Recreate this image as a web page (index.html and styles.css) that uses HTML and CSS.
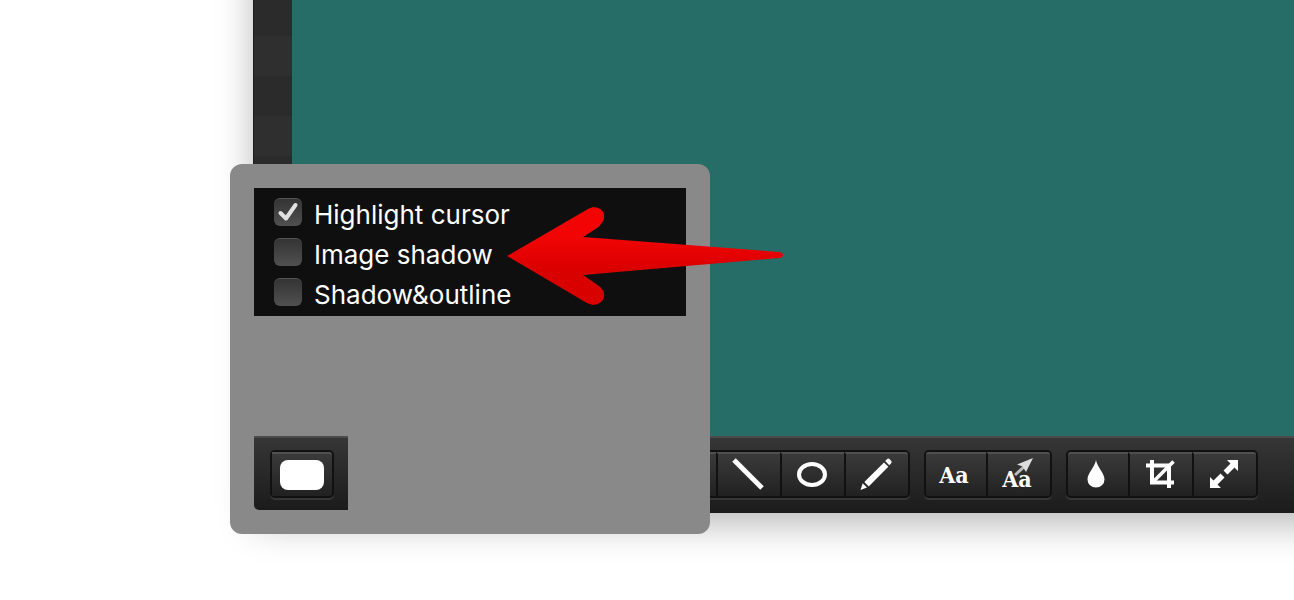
FILE: index.html
```html
<!DOCTYPE html>
<html lang="en">
<head>
    <meta charset="UTF-8">
    <title>Image Editor</title>
    <meta name="viewport" content="width=device-width, initial-scale=1">
    <link rel="stylesheet" href="styles.css">
</head>
<body>

    <main class="editor">
        <div class="workspace">
            <div class="side-strip"></div>
            <div class="canvas"></div>
        </div>

        <div class="toolbar">
            <div class="tool-group">
                <button type="button" aria-label="Rectangle">
                    <svg width="32" height="32" viewBox="0 0 32 32"><rect x="3" y="6" width="26" height="20" fill="none" stroke="#fff" stroke-width="4"/></svg>
                </button>
                <button type="button" aria-label="Line">
                    <svg width="32" height="32" viewBox="0 0 32 32"><path d="M2 2L30 30" stroke="#fff" stroke-width="5"/></svg>
                </button>
                <button type="button" aria-label="Ellipse">
                    <svg width="32" height="32" viewBox="0 0 32 32"><ellipse cx="16" cy="16.500" rx="13" ry="10.500" fill="none" stroke="#fff" stroke-width="4"/></svg>
                </button>
                <button type="button" aria-label="Pencil">
                    <svg width="32" height="32" viewBox="0 0 32 32" fill="#fff"><path d="M25.200 3L27.500 .7Q28.500 0 29.500 1L31.300 3Q32 4 31.300 5L29.300 7.300Z"/><path d="M24 4.500L28.300 8.800L8.700 28.500L4.300 24Z"/><path d="M2.700 25.300L7 29.500L.5 32Z"/></svg>
                </button>
            </div>
            <div class="tool-group">
                <button type="button" class="text-tool">Aa</button>
                <button type="button" class="text-tool callout">Aa
                    <svg width="22" height="20" viewBox="0 0 22 20"><path d="M3 17L13 8" stroke="#bbb" stroke-width="3"/><path d="M21 0L5 6.500L10.500 8.500L14 14Z" fill="#ddd"/></svg>
                </button>
            </div>
            <div class="tool-group">
                <button type="button" aria-label="Blur">
                    <svg width="32" height="32" viewBox="0 0 32 32"><path d="M15 2C16 9 23.500 15 23.500 21.500A8.500 8 0 0 1 6.500 21.500C6.500 15 14 9 15 2Z" fill="#fff"/></svg>
                </button>
                <button type="button" aria-label="Crop">
                    <svg width="32" height="32" viewBox="0 0 32 32" fill="none" stroke="#fff" stroke-width="4"><path d="M2 7.500H25V30"/><path d="M8 2V24.500H30"/><path d="M8.500 24.500L29.500 3.500" stroke-width="3.500"/></svg>
                </button>
                <button type="button" aria-label="Resize">
                    <svg width="32" height="32" viewBox="0 0 32 32" fill="#fff"><path d="M19 2H30V13L26.500 9.500L19.500 16.500L15.500 12.500L22.500 5.500Z"/><path d="M13 30H2V19L5.500 22.500L12.500 15.500L16.500 19.500L9.500 26.500Z"/></svg>
                </button>
            </div>
        </div>

        <div class="popover">
            <div class="options">
                <label class="option">
                    <span class="tick">
                        <input type="checkbox" checked>
                        <svg width="28" height="28" viewBox="0 0 28 28"><path d="M6.500 15L12 20.500L21.500 7" fill="none" stroke="#e2e2e2" stroke-width="4" stroke-linecap="round" stroke-linejoin="round"/></svg>
                    </span>
                    Highlight cursor
                </label>
                <label class="option">
                    <span class="tick"><input type="checkbox"></span>
                    Image shadow
                </label>
                <label class="option">
                    <span class="tick"><input type="checkbox"></span>
                    Shadow&amp;outline
                </label>
            </div>

            <div class="swatch-bar">
                <div class="tool-group">
                    <button type="button" class="swatch-button" aria-label="Background color"><span class="swatch"></span></button>
                </div>
            </div>

            <svg class="pointer" width="276" height="100" viewBox="0 0 276 100">
                <defs>
                    <linearGradient id="red" x1="0" y1="0" x2="0" y2="1">
                        <stop offset="0.300" stop-color="#f20404"/>
                        <stop offset="0.650" stop-color="#d90000"/>
                    </linearGradient>
                </defs>
                <path d="M0 50L81 3C91-3 103 7 94 18Q93 20 90 22L76 31L272 46Q276 47 276 49Q276 52 272 52L76 69L92 80C104 89 93 104 80 97Z" fill="url(#red)"/>
            </svg>
        </div>
    </main>

</body>
</html>
```
FILE: styles.css
```css
body {
    font-family: Inter, 'Liberation Sans', sans-serif;
    margin: 0;
    min-height: 100vh;
    display: flex;
    background: white;
    color: white;
    overflow: hidden;
}

/* The window runs past the top and right edges of the page */
.editor {
    position: relative;
    flex: 1;
    display: flex;
    flex-direction: column;
    margin: -60px -60px 87px 253px;
    box-shadow: 0 12px 34px rgba(0,0,0,0.27);
}

.workspace {
    flex: 1;
    display: flex;
}

.side-strip {
    width: 38px;
    border-left: 1px solid #1c1c1c;
    background: repeating-linear-gradient(#2f2f2f 0 40px, #2b2b2b 40px 80px) 0 16px;
}

.canvas {
    flex: 1;
    background: #266c67;
}

.toolbar, .swatch-bar {
    box-sizing: border-box;
    border-top: 2px solid #4b4b4b;
    background: linear-gradient(#363636, #1b1b1b);
}

.toolbar {
    display: flex;
    justify-content: flex-end;
    gap: 14px;
    height: 77px;
    padding: 12px 96px 0 0;
}

.tool-group {
    display: flex;
    box-sizing: border-box;
    height: 48px;
    border: 2px solid #111;
    border-radius: 5px;
    box-shadow: 0 2px 0 #363636;
}

    .tool-group button {
        display: flex;
        align-items: center;
        justify-content: center;
        box-sizing: border-box;
        width: 62px;
        padding: 0 2px 2px 0;
        border: 0;
        border-top: 2px solid #505050;
        background: linear-gradient(#3a3a3a, #212121);
        color: white;
    }

    .tool-group button:first-child {
        width: 60px;
        border-radius: 3px 0 0 3px;
    }

    .tool-group button + button {
        width: 64px;
        border-left: 2px solid #111;
    }

    .tool-group button:last-child {
        border-radius: 0 3px 3px 0;
    }

    .tool-group .text-tool {
        position: relative;
        padding-right: 4px;
        font: bold 23px 'DejaVu Serif Condensed', 'DejaVu Serif', serif;
    }

    .tool-group .callout {
        padding-top: 8px;
    }

    .tool-group .swatch-button {
        padding: 0;
    }

.callout svg {
    position: absolute;
    top: 4px;
    right: 16px;
}

.popover {
    position: absolute;
    left: -23px;
    bottom: -21px;
    display: flex;
    flex-direction: column;
    align-items: flex-start;
    gap: 120px;
    box-sizing: border-box;
    width: 480px;
    padding: 24px;
    border-radius: 12px;
    background: #898989;
}

.options {
    align-self: stretch;
    padding: 6px 20px 2px;
    background: #0f0f0f;
}

.option {
    display: flex;
    align-items: center;
    gap: 12px;
    height: 40px;
    font-size: 26px;
}

.tick {
    position: relative;
    height: 32px;
}

    .tick input {
        appearance: none;
        display: block;
        width: 28px;
        height: 28px;
        margin: 0;
        border-top: 1px solid #555;
        border-radius: 6px;
        background: linear-gradient(#343434, #505050);
    }

    .tick svg {
        position: absolute;
        left: 0;
        top: 0;
    }

.swatch-bar {
    height: 74px;
    padding: 12px 14px 0 16px;
    border-bottom-left-radius: 5px;
}

.swatch {
    width: 44px;
    height: 30px;
    border-radius: 8px;
    background: white;
}

.pointer {
    position: absolute;
    left: 277px;
    top: 42px;
}
```
